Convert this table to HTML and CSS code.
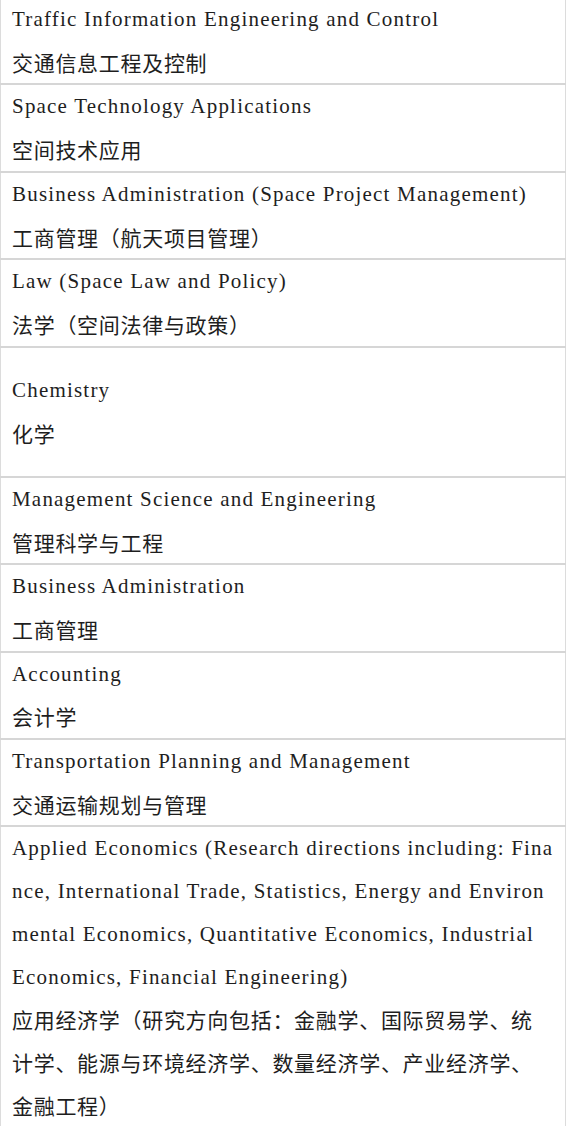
FILE: index.html
```html
<!DOCTYPE html>
<html lang="zh-CN">
<head>
<meta charset="utf-8">
<title>Majors</title>
<link rel="stylesheet" href="styles.css">
</head>
<body>
<table class="majors">
  <tbody>
    <tr><td><div class="en">Traffic Information Engineering and Control</div><div class="zh">交通信息工程及控制</div></td></tr>
    <tr><td><div class="en">Space Technology Applications</div><div class="zh">空间技术应用</div></td></tr>
    <tr><td><div class="en">Business Administration (Space Project Management)</div><div class="zh">工商管理（航天项目管理）</div></td></tr>
    <tr><td><div class="en">Law (Space Law and Policy)</div><div class="zh">法学（空间法律与政策）</div></td></tr>
    <tr class="tall"><td><div class="en">Chemistry</div><div class="zh">化学</div></td></tr>
    <tr><td><div class="en">Management Science and Engineering</div><div class="zh">管理科学与工程</div></td></tr>
    <tr><td><div class="en">Business Administration</div><div class="zh">工商管理</div></td></tr>
    <tr><td><div class="en">Accounting</div><div class="zh">会计学</div></td></tr>
    <tr><td><div class="en">Transportation Planning and Management</div><div class="zh">交通运输规划与管理</div></td></tr>
    <tr class="last"><td><div class="en">Applied Economics (Research directions including: Finance, International Trade, Statistics, Energy and Environmental Economics, Quantitative Economics, Industrial Economics, Financial Engineering)</div><div class="zh">应用经济学（研究方向包括：金融学、国际贸易学、统计学、能源与环境经济学、数量经济学、产业经济学、金融工程）</div></td></tr>
  </tbody>
</table>
</body>
</html>
```
FILE: styles.css
```css
html, body {
  margin: 0;
  padding: 0;
  background: #ffffff;
}

.majors {
  width: 566px;
  margin-top: -2px;
  border-collapse: collapse;
  border-left: 1px solid #dcdcdc;
  border-right: 1px solid #dcdcdc;
  font-family: "Liberation Serif", "Noto Sans CJK SC", serif;
  font-size: 21px;
  letter-spacing: 1.2px;
  color: #1e1e1e;
}

.majors td {
  padding: 0 11px;
  border-bottom: 2px solid #d6d6d6;
  line-height: 42.7px;
  vertical-align: middle;
  word-break: break-all;
}

.majors tr.tall td {
  padding-top: 21.4px;
  padding-bottom: 21.4px;
}

.majors tr.last td {
  border-bottom: none;
}

.zh {
  font-family: "Noto Sans CJK SC", sans-serif;
  font-size: 21px;
  letter-spacing: 0.7px;
}
```
